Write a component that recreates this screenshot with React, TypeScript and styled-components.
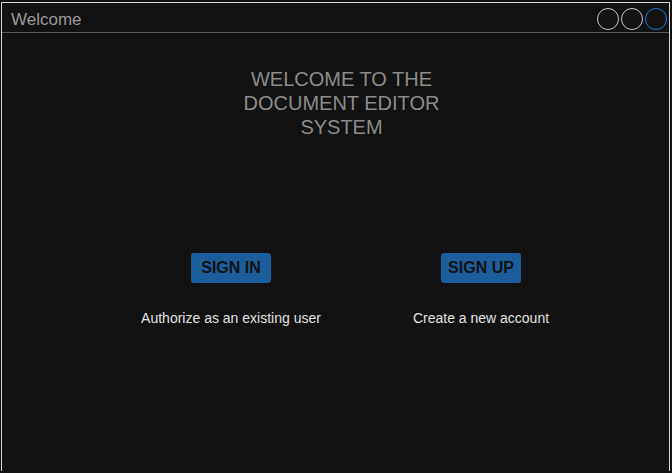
import styled, {createGlobalStyle} from "styled-components";

const GlobalStyle = createGlobalStyle`
  html, body {
    margin: 0;
    padding: 0;
    background-color: #111111;
    font-family: "Liberation Sans", Arial, sans-serif;
  }
`;

const Frame = styled.div`
  margin: 2px 2px 0 1px;
  height: 469px;
  box-sizing: border-box;
  border: 1px solid #d8d8d8;
  border-bottom: none;
  background-color: #121212;
  display: flex;
  flex-direction: column;
`;

const TitleBar = styled.header`
  display: flex;
  align-items: center;
  border-bottom: 1px solid #5a5a5a;
  padding: 2px 2px 0 9px;
  box-sizing: border-box;
  height: 30px;
`;

const Title = styled.span`
  color: #9a9a9a;
  font-size: 17px;
  margin-top: 2px;
`;

const Controls = styled.div`
  margin-left: auto;
  display: flex;
  gap: 2px;
`;

const Dot = styled.span<{ $active?: boolean }>`
  width: 22px;
  height: 22px;
  box-sizing: border-box;
  border-radius: 50%;
  border: 1px solid ${p => p.$active ? "#1e7ad8" : "#c8c8c8"};
`;

const Headline = styled.h1`
  margin: 34px 0 0 12px;
  text-align: center;
  font-size: 20px;
  line-height: 24px;
  font-weight: 400;
  color: #8c8c8c;
  align-self: center;
  width: 220px;
`;

const Options = styled.div`
  display: flex;
  margin-top: 114px;
  padding-left: 104px;
`;

const Option = styled.div`
  width: 250px;
  display: flex;
  flex-direction: column;
  align-items: center;
`;

const ActionBtn = styled.button`
  width: 80px;
  height: 30px;
  border: none;
  border-radius: 3px;
  background-color: #1c5e9c;
  color: #121212;
  font-family: "Liberation Sans", Arial, sans-serif;
  font-weight: 700;
  font-size: 16px;
  padding: 0;
`;

const Caption = styled.p`
  margin: 27px 0 0;
  font-size: 14px;
  line-height: 17px;
  color: #e2e2e2;
  white-space: nowrap;
`;

function App() {
    return (
        <>
            <GlobalStyle/>
            <Frame>
                <TitleBar>
                    <Title>Welcome</Title>
                    <Controls>
                        <Dot/>
                        <Dot/>
                        <Dot $active/>
                    </Controls>
                </TitleBar>
                <Headline>WELCOME TO THE DOCUMENT EDITOR SYSTEM</Headline>
                <Options>
                    <Option>
                        <ActionBtn>SIGN IN</ActionBtn>
                        <Caption>Authorize as an existing user</Caption>
                    </Option>
                    <Option>
                        <ActionBtn>SIGN UP</ActionBtn>
                        <Caption>Create a new account</Caption>
                    </Option>
                </Options>
            </Frame>
        </>
    )
}

export default App
